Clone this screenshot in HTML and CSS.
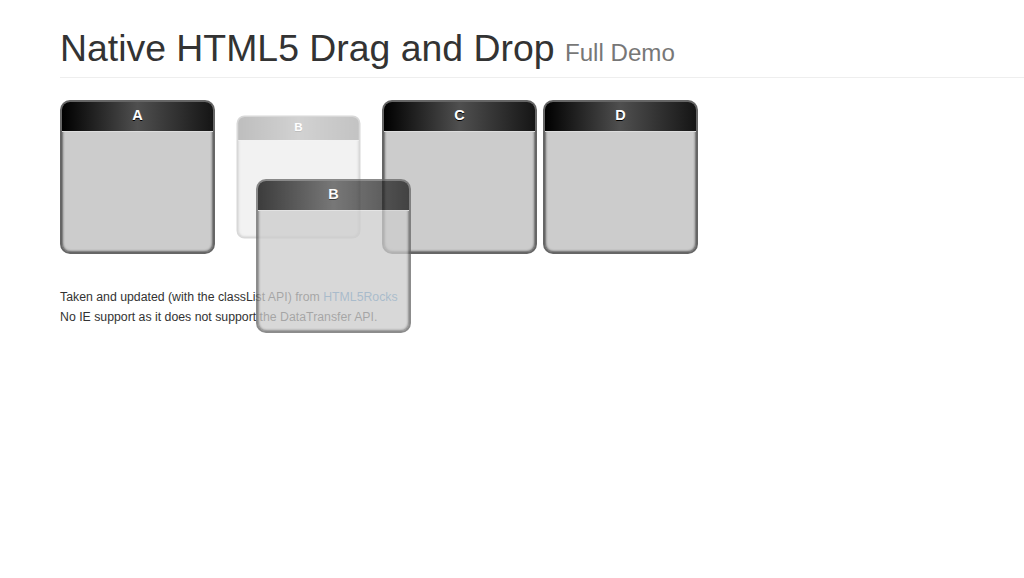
FILE: index.html
```html
<!DOCTYPE html>
<html lang="en">
<head>
<meta charset="utf-8">
<title>Native HTML5 Drag and Drop</title>
<link rel="stylesheet" href="styles.css">
</head>
<body>
<div class="container">
  <div class="page-header">
    <h1>Native HTML5 Drag and Drop <small>Full Demo</small></h1>
  </div>
  <div class="columns">
    <div class="column"><header>A</header></div>
    <div class="column moving"><header>B</header></div>
    <div class="column"><header>C</header></div>
    <div class="column"><header>D</header></div>
  </div>
  <div class="notes">
    <p>Taken and updated (with the classList API) from <a href="#">HTML5Rocks</a></p>
    <p>No IE support as it does not support the DataTransfer API.</p>
  </div>
</div>
<div class="column drag-ghost"><header>B</header></div>
</body>
</html>
```
FILE: styles.css
```css
html, body {
  margin: 0;
  padding: 0;
  background: #fff;
}
body {
  font-family: "Liberation Sans", Arial, Helvetica, sans-serif;
  font-size: 14px;
  color: #333;
  position: relative;
  width: 1024px;
  height: 578px;
  overflow: hidden;
}
.container {
  padding-left: 60px;
}
.page-header {
  padding: 28px 0 9px;
  margin: 0 0 22px;
  border-bottom: 1px solid #eee;
}
.page-header h1 {
  margin: 0;
  font-size: 37.4px;
  line-height: 40px;
  font-weight: 400;
  color: #333;
}
.page-header h1 small {
  font-size: 64.5%;
  line-height: 1;
  color: #777;
  font-weight: 400;
}
.columns {
  display: flex;
  gap: 6px;
}
.column {
  box-sizing: border-box;
  width: 155px;
  height: 154px;
  border: 2px solid #666;
  background-color: #ccc;
  border-radius: 10px;
  box-shadow: inset 0 0 3px #000;
  text-align: center;
  flex: none;
}
.column header {
  color: #fff;
  text-shadow: #000 0 1px;
  font-weight: 700;
  font-size: 14.5px;
  line-height: 20px;
  padding: 3px 5px 6px;
  background: linear-gradient(to right, #000 0%, #4f4f4f 50%, #151515 100%);
  border-bottom: 1px solid #ddd;
  border-radius: 8px 8px 0 0;
}
.column.moving {
  opacity: 0.25;
  transform: scale(0.8);
}
.drag-ghost {
  position: absolute;
  left: 256px;
  top: 179px;
  opacity: 0.75;
}
.notes {
  margin-top: 33px;
  font-size: 12.3px;
  line-height: 20px;
}
.notes p {
  margin: 0;
}
.notes a {
  color: #428bca;
  text-decoration: none;
}
```
